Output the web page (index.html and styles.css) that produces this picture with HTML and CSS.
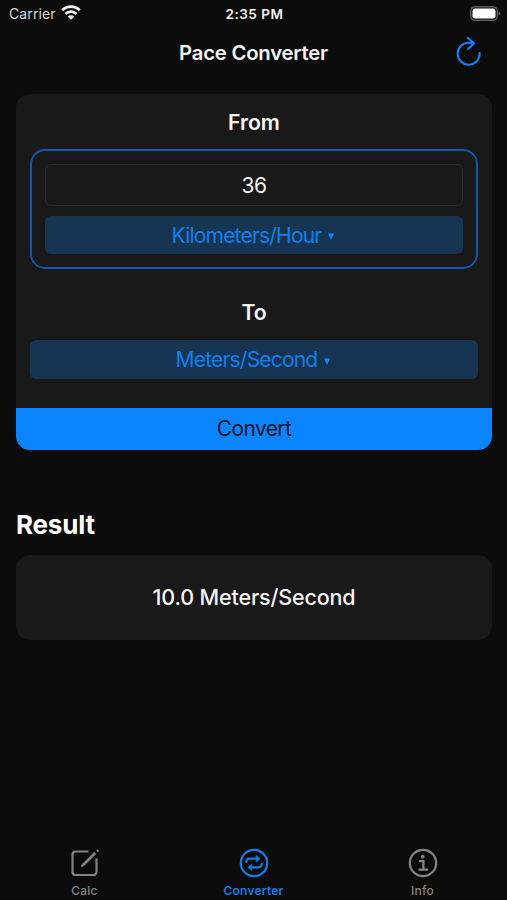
FILE: index.html
```html
<!DOCTYPE html>
<html lang="en">
<head>
<meta charset="utf-8">
<title>Pace Converter</title>
<link rel="stylesheet" href="styles.css">
</head>
<body>
<div class="screen">
  <div class="status">
    <div class="carrier"><span>Carrier</span>
      <svg width="20" height="15" viewBox="0 0 20 15" fill="none" stroke="#f4f4f4" stroke-width="2.8"><path d="M1.3 5.2a12.4 12.4 0 0 1 17.4 0M4.5 8.9a7.9 7.9 0 0 1 11 0"/><path d="M10 14.8 6.7 11.5a4.7 4.7 0 0 1 6.6 0Z" fill="#f4f4f4" stroke="none"/></svg>
    </div>
    <div class="time">2:35 PM</div>
    <div class="battery">
      <svg width="31" height="15" viewBox="0 0 31 15"><rect x=".8" y=".8" width="26.4" height="13.4" rx="4" fill="none" stroke="#5c5c5c" stroke-width="1.4"/><rect x="2.5" y="2.5" width="23" height="10" rx="2.3" fill="#fff"/><path d="M28.5 5q2 1 2 2.5t-2 2.5Z" fill="#5c5c5c"/></svg>
    </div>
  </div>
  <header class="nav">
    <h1>Pace Converter</h1>
    <svg class="refresh" width="26" height="30" viewBox="0 0 26 30" fill="none" stroke="#0a84ff" stroke-width="2" stroke-linecap="round" stroke-linejoin="round"><path d="M23.6 16.7A11 11 0 1 1 12.6 6.7Q15.3 6.7 17.8 7.1M11.7 1.7 18 7.2 12 13"/></svg>
  </header>
  <section class="card">
    <h2>From</h2>
    <div class="source">
      <div class="input">36</div>
      <div class="unit"><span>Kilometers/Hour</span><svg width="6" height="7" viewBox="0 0 6 7"><path d="M0 .5h6L3 7Z" fill="#0a84ff"/></svg></div>
    </div>
    <h2 class="to">To</h2>
    <div class="unit target"><span>Meters/Second</span><svg width="6" height="7" viewBox="0 0 6 7"><path d="M0 .5h6L3 7Z" fill="#0a84ff"/></svg></div>
    <div class="convert"><span>Convert</span></div>
  </section>
  <h2 class="result-title"><span>Result</span></h2>
  <section class="result"><span>10.0 Meters/Second</span></section>
  <nav class="tabs">
    <div class="tab">
      <svg width="30" height="30" viewBox="0 0 30 30" fill="none" stroke="#848484" stroke-width="2.2"><path d="M18.5 3.5H5.5a3 3 0 0 0-3 3v17.5a3 3 0 0 0 3 3h18a3 3 0 0 0 3-3V10.5"/><path d="m12.8 17.2 12.4-12.2" stroke-width="2.6"/><path d="m10.8 19 1-2.9 2.1 2.1Z" fill="#848484" stroke="none"/><path d="m27 3.3 1.2-1.2" stroke-width="2.6"/></svg>
      <span>Calc</span>
    </div>
    <div class="tab active">
      <svg width="30" height="30" viewBox="0 0 30 30" fill="none" stroke="#137de8" stroke-width="2.2" stroke-linecap="round" stroke-linejoin="round"><circle cx="15" cy="15" r="13.2"/><path d="M7.4 14v-.6a2.7 2.7 0 0 1 2.7-2.7H18M22.6 16v.6a2.7 2.7 0 0 1-2.7 2.7H12"/><path d="m17.5 7.7 3.6 3-3.6 3ZM12.5 16.3l-3.6 3 3.6 3Z" fill="#137de8" stroke-width=".7"/></svg>
      <span>Converter</span>
    </div>
    <div class="tab">
      <svg width="30" height="30" viewBox="0 0 30 30" fill="none" stroke="#848484" stroke-width="2.2"><circle cx="15" cy="15" r="13.2"/><circle cx="14.8" cy="8.7" r="1.9" fill="#848484" stroke="none"/><path d="M12 13.2h3.4v8.2M11.4 21.7h7.8" stroke-linecap="round"/></svg>
      <span>Info</span>
    </div>
  </nav>
</div>
</body>
</html>
```
FILE: styles.css
```css
* { box-sizing: border-box; }
body { margin: 0; background: #0c0c0c; color: #f5f5f5; font-family: Inter, "Liberation Sans", sans-serif; }
h1, h2 { margin: 0; font-weight: 600; }
svg { display: block; flex: none; }
.screen { width: 507px; height: 900px; display: flex; flex-direction: column; overflow: hidden; }
.status { height: 27px; padding: 0 6px 0 9px; display: grid; grid-template-columns: 1fr auto 1fr; align-items: center; font-size: 14px; }
.carrier { display: flex; align-items: center; gap: 5px; color: #d8d8d8; letter-spacing: .1px; }
.carrier svg { margin-top: -2px; }
.time { font-weight: 600; font-size: 13.5px; letter-spacing: .5px; padding-right: 1px; }
.battery { justify-self: end; }
.nav { height: 67px; padding: 10px 25px 0; display: grid; grid-template-columns: 1fr auto 1fr; align-items: start; }
.nav h1 { grid-column: 2; font-size: 20.3px; line-height: 32px; letter-spacing: -.2px; }
.refresh { justify-self: end; margin-top: -1px; }
.card { height: 356px; margin: 0 15px 0 16px; padding-top: 14px; background: #191919; border-radius: 14px; display: flex; flex-direction: column; overflow: hidden; }
.card h2 { font-size: 21.2px; line-height: 28px; text-align: center; }
.source { height: 120px; margin: 13px 14px 0; padding: 13px; border: 2px solid #1453b0; border-radius: 15px; display: flex; flex-direction: column; gap: 10px; }
.input { height: 42px; border: 1px solid #292b2b; border-radius: 6px; font-size: 21px; letter-spacing: -.5px; line-height: 42px; text-align: center; }
.unit { height: 39px; border-radius: 6px; background: #163552; color: #137fea; display: flex; align-items: center; justify-content: center; gap: 7px; padding-right: 2px; font-size: 21px; letter-spacing: -.8px; }
.unit svg { margin-top: 3px; }
.card .to { margin-top: 29px; }
.target { margin: 14px 14px 0; }
.convert { height: 42px; margin-top: auto; background: #0a84ff; color: #071522; font-size: 21px; letter-spacing: -.6px; line-height: 42px; text-align: center; }
.result-title { height: 105px; padding: 59px 16px 0; font-size: 26px; line-height: 32px; letter-spacing: -.2px; font-weight: 700; color: #fff; }
.result { height: 85px; margin: 0 15px 0 16px; background: #191919; border-radius: 14px; font-size: 21.5px; letter-spacing: -.15px; font-weight: 500; line-height: 85px; text-align: center; }
.tabs { margin-top: auto; height: 52px; display: grid; grid-template-columns: repeat(3, 1fr); }
.tab { display: flex; flex-direction: column; align-items: center; color: #848484; font-size: 12px; font-weight: 500; line-height: 16px; gap: 5px; letter-spacing: .2px; }
.active { color: #137de8; font-weight: 600; }
```
